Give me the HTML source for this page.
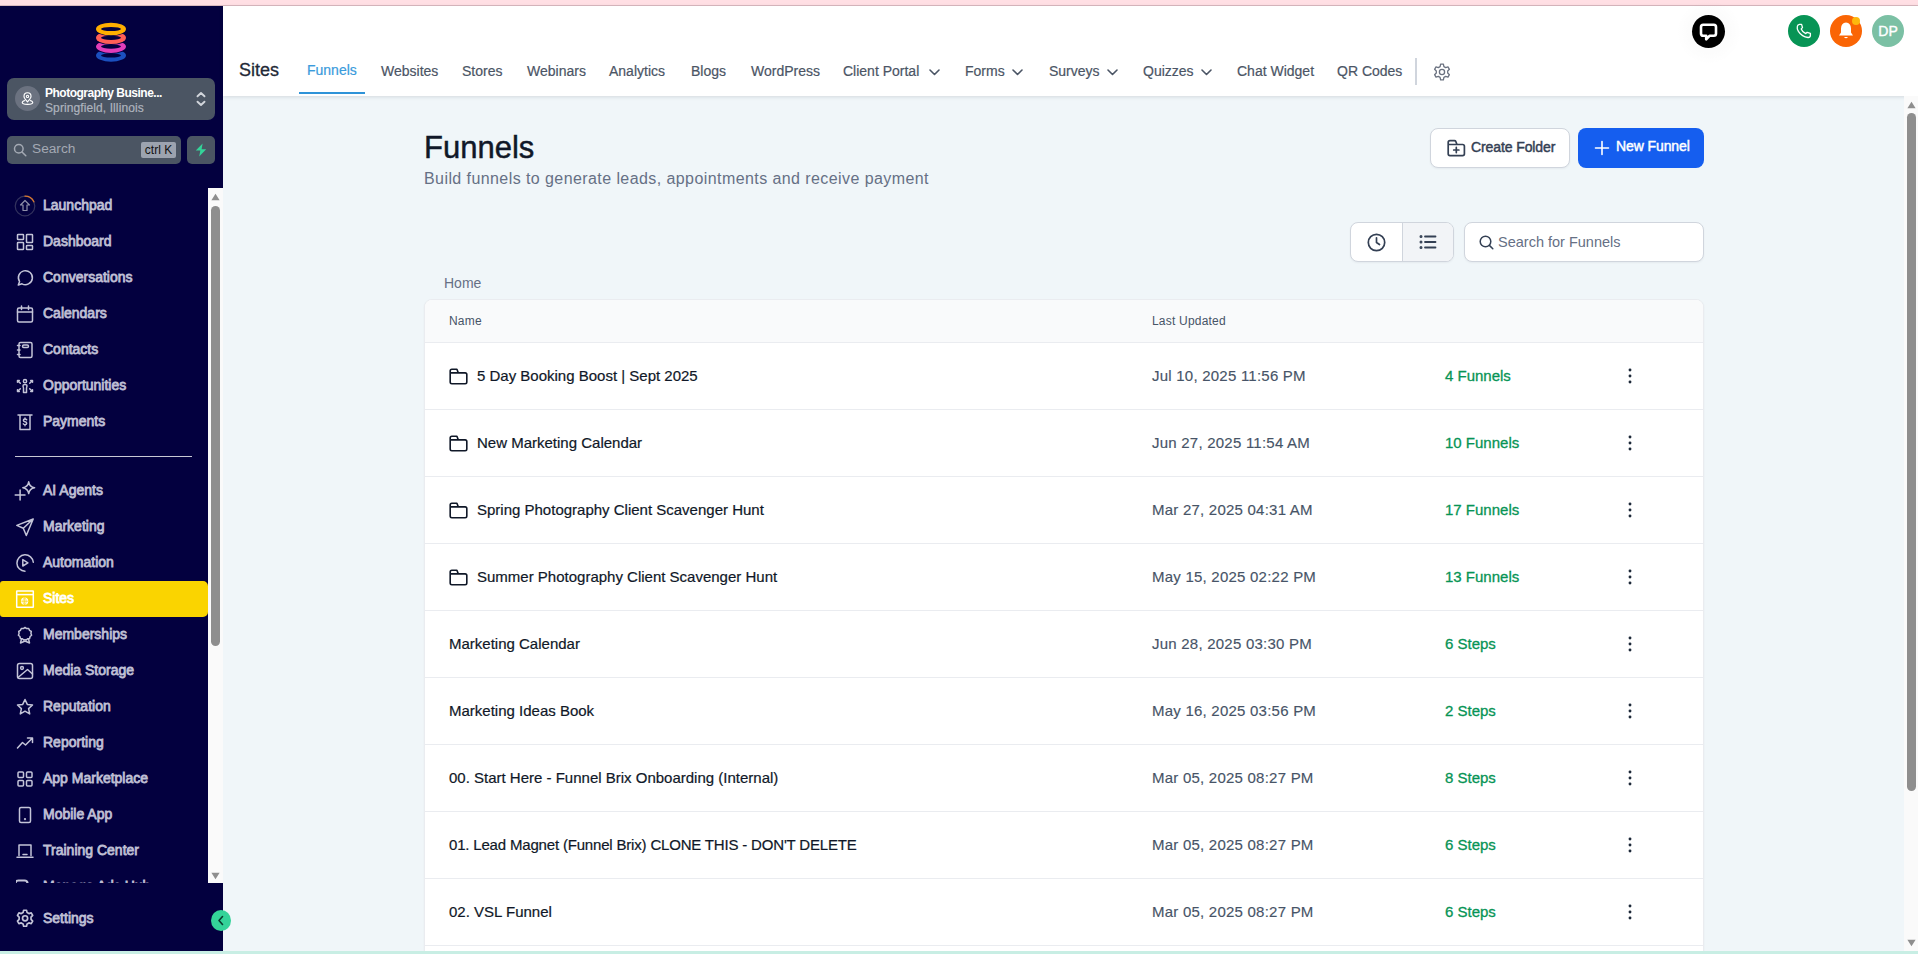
<!DOCTYPE html>
<html><head><meta charset="utf-8"><title>Funnels</title>
<style>
*{box-sizing:border-box;margin:0;padding:0}
html,body{width:1918px;height:954px;overflow:hidden;background:#F0F6F9;font-family:"Liberation Sans",sans-serif;position:relative}
.abs{position:absolute}
#pink{position:absolute;left:0;top:0;width:1918px;height:6px;background:#FFDFE4;border-bottom:1px solid #D9B9BF}
#teal{position:absolute;left:0;top:951px;width:1918px;height:3px;background:#C8EEE4}
#side{position:absolute;left:0;top:6px;width:223px;height:945px;background:#03003F;overflow:hidden}
#logo{position:absolute;left:95px;top:15px}
#loc{position:absolute;left:7px;top:72px;width:208px;height:42px;border-radius:7px;background:#4B5563}
#loc .pin{position:absolute;left:8px;top:8px;width:25px;height:25px;border-radius:50%;background:#6B7280}
#loc .t1{position:absolute;left:38px;top:8px;font-size:12px;font-weight:bold;color:#fff;letter-spacing:-0.5px;white-space:nowrap}
#loc .t2{position:absolute;left:38px;top:23px;font-size:12px;color:#AEB4BE;white-space:nowrap;letter-spacing:0.1px;-webkit-text-stroke:0.2px #AEB4BE}
#loc .chev{position:absolute;left:188px;top:12px}
#srch{position:absolute;left:7px;top:130px;width:174px;height:28px;border-radius:5px;background:#4B5563}
#srch .tx{position:absolute;left:25px;top:5px;font-size:13.7px;color:#A3A9B3}
#srch .kb{position:absolute;left:134px;top:6px;width:35px;height:16px;border-radius:2px;background:#9CA3AF;font-size:12px;color:#111;text-align:center;line-height:16px;letter-spacing:0px}
#bolt{position:absolute;left:187px;top:130px;width:28px;height:28px;border-radius:5px;background:#4B5563}
#sep{position:absolute;left:15px;top:450px;width:177px;height:1px;background:#C8C8D4}
#sites-hl{position:absolute;left:0;top:575px;width:208px;height:36px;border-radius:3px 5px 5px 3px;background:#FAD400}
#navwrap{position:absolute;left:0;top:182px;width:208px;height:695px;overflow:hidden}
.ni{position:absolute;left:0;width:208px;height:36px}
.ni .nic{position:absolute;display:block;line-height:0}
.ni .nt{position:absolute;left:43px;top:0;line-height:36px;font-size:14px;color:#BFBFD4;white-space:nowrap;-webkit-text-stroke:0.8px currentColor}
#sscroll{position:absolute;left:208px;top:182px;width:15px;height:695px;background:#FAFAFA}
#settings{position:absolute;left:0;top:894px;width:208px;height:36px}
#collapse{position:absolute;left:211px;top:910px;width:20px;height:21px;border-radius:50%;background:#34D399}

#hdr{position:absolute;left:223px;top:6px;width:1695px;height:90px;background:#fff;box-shadow:0 1px 4px rgba(16,24,40,0.13)}
.tab{position:absolute;top:60px;font-size:14px;color:#4B5565;white-space:nowrap;line-height:22px;-webkit-text-stroke:0.2px currentColor}
.chv{position:absolute;top:69px}
#main-scroll{position:absolute;left:1904px;top:96px;width:14px;height:855px;background:#FAFAFA}
.sb-thumb{position:absolute;background:#8E8E8E;border-radius:5px}

#title{position:absolute;left:424px;top:128px;font-size:31px;color:#101828;line-height:40px;white-space:nowrap;letter-spacing:0px;-webkit-text-stroke:0.45px #101828}
#sub{position:absolute;left:424px;top:168px;font-size:16px;color:#667085;line-height:22px;white-space:nowrap;letter-spacing:0.42px}
.btn{position:absolute;border-radius:8px;font-size:14px;white-space:nowrap;-webkit-text-stroke:0.45px currentColor;letter-spacing:-0.1px}
#home{position:absolute;left:444px;top:274px;font-size:14px;color:#667085;line-height:18px}
#table{position:absolute;left:424px;top:299px;width:1280px;height:660px;background:#fff;border:1px solid #EAECF0;border-radius:8px;overflow:hidden;box-shadow:0 1px 2px rgba(16,24,40,0.05)}
#thead{position:absolute;left:0;top:0;width:100%;height:43px;background:#F9FAFB;border-bottom:1px solid #EAECF0}
#thead span{position:absolute;top:13px;font-size:12px;letter-spacing:0.2px;color:#475467;line-height:16px}
.row{position:absolute;left:0;width:100%;height:67px;border-bottom:1px solid #EAECF0}
.row .fi{position:absolute;top:24.5px;line-height:0}
.row .rn{position:absolute;top:24px;font-size:15px;color:#101828;line-height:18px;white-space:nowrap;-webkit-text-stroke:0.2px #101828}
.row .rd{position:absolute;left:727px;top:24px;font-size:15px;color:#475467;line-height:18px;white-space:nowrap;letter-spacing:0.23px;-webkit-text-stroke:0.15px #475467}
.row .rc{position:absolute;left:1020px;top:24px;font-size:15px;color:#079455;line-height:18px;white-space:nowrap;-webkit-text-stroke:0.3px currentColor}
.row .kb{position:absolute;left:1203px;top:25px;line-height:0}
</style></head>
<body>
<div id="pink"></div>

<!-- SIDEBAR -->
<div id="side">
  <svg id="logo" width="32" height="42" viewBox="0 0 32 42"><ellipse cx="16" cy="34.4" rx="16" ry="7.2" fill="#03003F"/><ellipse cx="16" cy="34.4" rx="15" ry="6.3" fill="#1B4FBF"/><ellipse cx="16" cy="34.4" rx="10" ry="2.1" fill="#03003F"/><ellipse cx="16" cy="25.6" rx="16" ry="7.2" fill="#03003F"/><ellipse cx="16" cy="25.6" rx="15" ry="6.3" fill="#E13DBA"/><ellipse cx="16" cy="25.6" rx="10" ry="2.1" fill="#03003F"/><ellipse cx="16" cy="16.8" rx="16" ry="7.2" fill="#03003F"/><ellipse cx="16" cy="16.8" rx="15" ry="6.3" fill="#FF5E57"/><ellipse cx="16" cy="16.8" rx="10" ry="2.1" fill="#03003F"/><ellipse cx="16" cy="8.0" rx="16" ry="7.2" fill="#03003F"/><ellipse cx="16" cy="8.0" rx="15" ry="6.3" fill="#FFAE00"/><ellipse cx="16" cy="8.0" rx="10" ry="2.1" fill="#03003F"/></svg>
  <div id="loc">
    <div class="pin"><svg width="25" height="25" viewBox="0 0 25 25" fill="none" stroke="#fff" stroke-width="1.3"><g transform="translate(12.5 13.2) scale(0.88) translate(-12.5 -12.5)"><path d="M12.5 15.5 Q8.5 11.5 8.5 9.2 A4 4 0 0 1 16.5 9.2 Q16.5 11.5 12.5 15.5 Z"/><circle cx="12.5" cy="9.3" r="1.3" fill="none"/><path d="M9.5 13.8 Q6.5 14.8 6.5 16.2 Q6.5 18.3 12.5 18.3 Q18.5 18.3 18.5 16.2 Q18.5 14.8 15.5 13.8"/></g></svg></div>
    <div class="t1">Photography Busine...</div>
    <div class="t2">Springfield, Illinois</div>
    <svg class="chev" width="12" height="18" viewBox="0 0 12 18" fill="none" stroke="#D1D5DB" stroke-width="1.9" stroke-linecap="round" stroke-linejoin="round"><path d="M2.5 6.3 L6 3 L9.5 6.3 M2.5 11.7 L6 15 L9.5 11.7"/></svg>
  </div>
  <div id="srch">
    <svg class="abs" style="left:6px;top:7px" width="14" height="14" viewBox="0 0 14 14" fill="none" stroke="#A3A9B3" stroke-width="1.5" stroke-linecap="round"><circle cx="5.8" cy="5.8" r="4.3"/><path d="M9 9 L12.8 12.8"/></svg>
    <div class="tx">Search</div>
    <div class="kb">ctrl K</div>
  </div>
  <div id="bolt"><svg class="abs" style="left:7px;top:7px" width="14" height="14" viewBox="0 0 14 14"><path d="M8.6 0.6 L1.8 7.6 H6.3 L5.2 13.4 L12.2 6.2 H7.6 Z" fill="#34D399"/></svg></div>
  <div id="sep"></div>
  <div id="sites-hl"></div>
  <div id="navwrap">
<div class="ni" style="top:-1px"><span class="nic" style="left:14px;top:8px"><svg width="22" height="22" viewBox="0 0 22 22" fill="none" stroke-linecap="round" stroke-linejoin="round"><circle cx="11" cy="11" r="9.8" stroke="#34335E" stroke-width="1.2"/><path d="M11 1.2 A9.8 9.8 0 0 1 19.9 6.8" stroke="#D9782F" stroke-width="1.3"/><path d="M11 5.5 L15.5 10 H13 V15.5 H9 V10 H6.5 Z" stroke="#8E8EA8" stroke-width="1.2"/></svg></span><span class="nt" style="color:#BFBFD4">Launchpad</span></div>
<div class="ni" style="top:35px"><span class="nic" style="left:16px;top:10px"><svg width="18" height="18" viewBox="0 0 18 18" fill="none" stroke="#C4C4D8" stroke-width="1.5" stroke-linecap="round" stroke-linejoin="round" ><rect x="1.5" y="1.5" width="6" height="5" rx="0.6"/><rect x="10.5" y="1.5" width="6" height="8" rx="0.6"/><rect x="1.5" y="9.5" width="6" height="7" rx="0.6"/><rect x="10.5" y="12.5" width="6" height="4" rx="0.6"/></svg></span><span class="nt" style="color:#BFBFD4">Dashboard</span></div>
<div class="ni" style="top:71px"><span class="nic" style="left:16px;top:10px"><svg width="18" height="18" viewBox="0 0 18 18" fill="none" stroke="#C4C4D8" stroke-width="1.5" stroke-linecap="round" stroke-linejoin="round" ><path d="M2.3 16 L3.6 12.6 A7 7 0 1 1 6 14.8 Z"/></svg></span><span class="nt" style="color:#BFBFD4">Conversations</span></div>
<div class="ni" style="top:107px"><span class="nic" style="left:16px;top:10px"><svg width="18" height="18" viewBox="0 0 18 18" fill="none" stroke="#C4C4D8" stroke-width="1.5" stroke-linecap="round" stroke-linejoin="round" ><rect x="1.5" y="3" width="15" height="14" rx="1.5"/><path d="M1.5 7 H16.5 M5.5 1 V4.5 M12.5 1 V4.5"/></svg></span><span class="nt" style="color:#BFBFD4">Calendars</span></div>
<div class="ni" style="top:143px"><span class="nic" style="left:16px;top:10px"><svg width="18" height="18" viewBox="0 0 18 18" fill="none" stroke="#C4C4D8" stroke-width="1.5" stroke-linecap="round" stroke-linejoin="round" ><rect x="3" y="1.5" width="13" height="15" rx="1.5"/><rect x="6.5" y="4" width="6" height="2.5" rx="1.2"/><path d="M1.5 4.5 H4 M1.5 9 H4 M1.5 13.5 H4"/></svg></span><span class="nt" style="color:#BFBFD4">Contacts</span></div>
<div class="ni" style="top:179px"><span class="nic" style="left:16px;top:10px"><svg width="18" height="18" viewBox="0 0 18 18" fill="none" stroke="#C4C4D8" stroke-width="1.5" stroke-linecap="round" stroke-linejoin="round" ><circle cx="9" cy="4.2" r="1.6"/><path d="M7.5 15.5 V11 Q6.8 9.5 7.2 8 Q9 6.8 10.8 8 Q11.2 9.5 10.5 11 V15.5 Z"/><path d="M1.5 3.5 L4.3 6.3 M1.5 3.5 V5.3 M1.5 3.5 H3.3 M16.5 3.5 L13.7 6.3 M16.5 3.5 V5.3 M16.5 3.5 H14.7 M1.5 14.5 L4.3 11.7 M1.5 14.5 V12.7 M1.5 14.5 H3.3 M16.5 14.5 L13.7 11.7 M16.5 14.5 V12.7 M16.5 14.5 H14.7"/></svg></span><span class="nt" style="color:#BFBFD4">Opportunities</span></div>
<div class="ni" style="top:215px"><span class="nic" style="left:16px;top:10px"><svg width="18" height="18" viewBox="0 0 18 18" fill="none" stroke="#C4C4D8" stroke-width="1.5" stroke-linecap="round" stroke-linejoin="round" ><path d="M2 2 H16 M4 2 V16.5 H14 V2"/><path d="M10.6 6.8 Q10 6 9 6 Q7.4 6 7.4 7.3 Q7.4 8.4 9 8.7 Q10.7 9 10.7 10.3 Q10.7 11.7 9 11.7 Q7.9 11.7 7.3 10.9 M9 5 V6 M9 11.7 V12.8"/></svg></span><span class="nt" style="color:#BFBFD4">Payments</span></div>
<div class="ni" style="top:284px"><span class="nic" style="left:16px;top:10px"><svg width="18" height="18" viewBox="0 0 18 18" fill="none" stroke="#C4C4D8" stroke-width="1.5" stroke-linecap="round" stroke-linejoin="round" style="overflow:visible"><path d="M-0.8 13 H9 M4.1 8.1 V17.9"/><path d="M12.7 -0.2 Q13.5 4.9 18.6 5.7 Q13.5 6.5 12.7 11.6 Q11.9 6.5 6.8 5.7 Q11.9 4.9 12.7 -0.2 Z"/></svg></span><span class="nt" style="color:#BFBFD4">AI Agents</span></div>
<div class="ni" style="top:320px"><span class="nic" style="left:16px;top:10px"><svg width="18" height="18" viewBox="0 0 18 18" fill="none" stroke="#C4C4D8" stroke-width="1.5" stroke-linecap="round" stroke-linejoin="round" style="overflow:visible"><path d="M17.2 1 L0.8 7.4 L7.3 10.3 L10.3 17.5 Z M17.2 1 L7.3 10.3"/></svg></span><span class="nt" style="color:#BFBFD4">Marketing</span></div>
<div class="ni" style="top:356px"><span class="nic" style="left:16px;top:10px"><svg width="18" height="18" viewBox="0 0 18 18" fill="none" stroke="#C4C4D8" stroke-width="1.5" stroke-linecap="round" stroke-linejoin="round" style="overflow:visible"><path d="M17.3 8.3 A8.2 8.2 0 1 0 9 17.2"/><path d="M6.8 5.6 V12 L11.9 8.8 Z"/></svg></span><span class="nt" style="color:#BFBFD4">Automation</span></div>
<div class="ni" style="top:392px"><span class="nic" style="left:16px;top:10px"><svg width="18" height="18" viewBox="0 0 18 18" fill="none" stroke="#FFFFFF" stroke-width="1.5" style="overflow:visible"><rect x="0.7" y="0.9" width="16.6" height="16.4" rx="0.3"/><path d="M0.7 4.6 H17.3"/><circle cx="8.6" cy="11.2" r="3.6" fill="#fff" stroke="none"/><path d="M5.2 11.2 H12 M8.6 7.7 V14.7" stroke="#FAD400" stroke-width="0.7"/><ellipse cx="8.6" cy="11.2" rx="1.6" ry="3.4" stroke="#FAD400" stroke-width="0.6"/></svg></span><span class="nt" style="color:#FFFFFF">Sites</span></div>
<div class="ni" style="top:428px"><span class="nic" style="left:16px;top:10px"><svg width="18" height="18" viewBox="0 0 18 18" fill="none" stroke="#C4C4D8" stroke-width="1.5" stroke-linecap="round" stroke-linejoin="round" ><path d="M9 1.5 L10.7 2.6 L12.7 2.5 L13.5 4.3 L15.3 5.3 L14.9 7.3 L15.6 9.2 L14.1 10.5 L13.6 12.5 L11.6 12.7 L10.2 14.1 L9 13.6 L7.8 14.1 L6.4 12.7 L4.4 12.5 L3.9 10.5 L2.4 9.2 L3.1 7.3 L2.7 5.3 L4.5 4.3 L5.3 2.5 L7.3 2.6 Z"/><path d="M5.5 12.8 L4.5 17 L9 15 L13.5 17 L12.5 12.8"/></svg></span><span class="nt" style="color:#BFBFD4">Memberships</span></div>
<div class="ni" style="top:464px"><span class="nic" style="left:16px;top:10px"><svg width="18" height="18" viewBox="0 0 18 18" fill="none" stroke="#C4C4D8" stroke-width="1.5" stroke-linecap="round" stroke-linejoin="round" ><rect x="1.5" y="1.5" width="15" height="15" rx="2"/><circle cx="6" cy="6" r="1.4"/><path d="M2 15.5 L11.5 7.5 L16.5 12"/></svg></span><span class="nt" style="color:#BFBFD4">Media Storage</span></div>
<div class="ni" style="top:500px"><span class="nic" style="left:16px;top:10px"><svg width="18" height="18" viewBox="0 0 18 18" fill="none" stroke="#C4C4D8" stroke-width="1.5" stroke-linecap="round" stroke-linejoin="round" ><path d="M9 1.5 L11.3 6.4 L16.5 7 L12.6 10.6 L13.7 15.9 L9 13.2 L4.3 15.9 L5.4 10.6 L1.5 7 L6.7 6.4 Z"/></svg></span><span class="nt" style="color:#BFBFD4">Reputation</span></div>
<div class="ni" style="top:536px"><span class="nic" style="left:16px;top:10px"><svg width="18" height="18" viewBox="0 0 18 18" fill="none" stroke="#C4C4D8" stroke-width="1.5" stroke-linecap="round" stroke-linejoin="round" ><path d="M1.5 14 L6.5 8.5 L9.5 11 L16.5 4 M11.5 4 H16.5 V8.5"/></svg></span><span class="nt" style="color:#BFBFD4">Reporting</span></div>
<div class="ni" style="top:572px"><span class="nic" style="left:16px;top:10px"><svg width="18" height="18" viewBox="0 0 18 18" fill="none" stroke="#C4C4D8" stroke-width="1.5" stroke-linecap="round" stroke-linejoin="round" ><rect x="2" y="2" width="5.5" height="5.5" rx="1"/><rect x="10.5" y="2" width="5.5" height="5.5" rx="1"/><rect x="2" y="10.5" width="5.5" height="5.5" rx="1"/><rect x="10.5" y="10.5" width="5.5" height="5.5" rx="1"/></svg></span><span class="nt" style="color:#BFBFD4">App Marketplace</span></div>
<div class="ni" style="top:608px"><span class="nic" style="left:16px;top:10px"><svg width="18" height="18" viewBox="0 0 18 18" fill="none" stroke="#C4C4D8" stroke-width="1.5" stroke-linecap="round" stroke-linejoin="round" ><rect x="3.5" y="1.5" width="11" height="15" rx="1.5"/><circle cx="9" cy="13.2" r="0.4" fill="#C4C4D8"/></svg></span><span class="nt" style="color:#BFBFD4">Mobile App</span></div>
<div class="ni" style="top:644px"><span class="nic" style="left:16px;top:10px"><svg width="18" height="18" viewBox="0 0 18 18" fill="none" stroke="#C4C4D8" stroke-width="1.5" stroke-linecap="round" stroke-linejoin="round" ><path d="M3 13.5 V3 H15 V13.5 M1 15.2 H17"/><path d="M7 12.5 H11"/></svg></span><span class="nt" style="color:#BFBFD4">Training Center</span></div>
<div class="ni" style="top:680px"><span class="nic" style="left:16px;top:10px"><svg width="18" height="18" viewBox="0 0 18 18" fill="none" stroke="#C4C4D8" stroke-width="1.5" stroke-linecap="round" stroke-linejoin="round" ><rect x="-0.5" y="2.5" width="12" height="14" rx="3" stroke-width="2.2"/></svg></span><span class="nt" style="color:#BFBFD4">Manage Ads Hub</span></div>

  </div>
  <div id="sscroll">
    <svg class="abs" style="left:3px;top:5px" width="9" height="8" viewBox="0 0 9 8"><path d="M4.5 0.8 L8.6 7.2 H0.4 Z" fill="#8E8E8E"/></svg>
    <div class="sb-thumb" style="left:3px;top:18px;width:9px;height:440px"></div>
    <svg class="abs" style="left:3px;top:684px" width="9" height="8" viewBox="0 0 9 8"><path d="M0.4 0.8 H8.6 L4.5 7.2 Z" fill="#8E8E8E"/></svg>
  </div>
  <div id="settings"><span class="abs" style="left:15px;top:8px;line-height:0;transform:scale(1.12);transform-origin:0 0"><svg width="18" height="18" viewBox="0 0 18 18" fill="none" stroke="#C4C4D8" stroke-width="1.5" stroke-linecap="round" stroke-linejoin="round" ><path d="M7.7 1.5 H10.3 L10.8 3.6 L12.4 4.5 L14.5 3.9 L15.8 6.1 L14.3 7.7 V9.6 L15.8 11.2 L14.5 13.4 L12.4 12.8 L10.8 13.7 L10.3 15.8 H7.7 L7.2 13.7 L5.6 12.8 L3.5 13.4 L2.2 11.2 L3.7 9.6 V7.7 L2.2 6.1 L3.5 3.9 L5.6 4.5 L7.2 3.6 Z" transform="translate(0,0.5)"/><circle cx="9" cy="9.2" r="2.3"/></svg></span><span class="abs" style="left:43px;top:0;line-height:36px;font-size:14px;color:#BFBFD4;-webkit-text-stroke:0.8px #BFBFD4">Settings</span></div>
</div>
<div id="collapse"><svg class="abs" style="left:5px;top:5px" width="10" height="11" viewBox="0 0 10 11" fill="none" stroke="#0B3B2E" stroke-width="1.6" stroke-linecap="round" stroke-linejoin="round"><path d="M6.5 1.5 L3 5.5 L6.5 9.5"/></svg></div>

<!-- HEADER -->
<div id="hdr"></div>
<div class="abs" style="left:239px;top:58px;font-size:18px;color:#1F2937;line-height:24px;-webkit-text-stroke:0.3px #1F2937">Sites</div>
<div class="tab" style="left:307px;top:59px;color:#3A9BDC">Funnels</div>
<div class="abs" style="left:299px;top:92px;width:66px;height:2px;background:#2F93D8"></div>
<div class="tab" style="left:381px">Websites</div>
<div class="tab" style="left:462px">Stores</div>
<div class="tab" style="left:527px">Webinars</div>
<div class="tab" style="left:609px">Analytics</div>
<div class="tab" style="left:691px">Blogs</div>
<div class="tab" style="left:751px">WordPress</div>
<div class="tab" style="left:843px">Client Portal</div>
<div class="tab" style="left:965px">Forms</div>
<div class="tab" style="left:1049px">Surveys</div>
<div class="tab" style="left:1143px">Quizzes</div>
<div class="tab" style="left:1237px">Chat Widget</div>
<div class="tab" style="left:1337px">QR Codes</div>
<svg class="chv" style="left:929px" width="11" height="7" viewBox="0 0 11 7" fill="none" stroke="#4B5565" stroke-width="1.6" stroke-linecap="round" stroke-linejoin="round"><path d="M1 1 L5.5 5.5 L10 1"/></svg>
<svg class="chv" style="left:1012px" width="11" height="7" viewBox="0 0 11 7" fill="none" stroke="#4B5565" stroke-width="1.6" stroke-linecap="round" stroke-linejoin="round"><path d="M1 1 L5.5 5.5 L10 1"/></svg>
<svg class="chv" style="left:1107px" width="11" height="7" viewBox="0 0 11 7" fill="none" stroke="#4B5565" stroke-width="1.6" stroke-linecap="round" stroke-linejoin="round"><path d="M1 1 L5.5 5.5 L10 1"/></svg>
<svg class="chv" style="left:1201px" width="11" height="7" viewBox="0 0 11 7" fill="none" stroke="#4B5565" stroke-width="1.6" stroke-linecap="round" stroke-linejoin="round"><path d="M1 1 L5.5 5.5 L10 1"/></svg>

<div class="abs" style="left:1415px;top:58px;width:2px;height:27px;background:#D0D5DD"></div>
<svg class="abs" style="left:1432px;top:62px" width="20" height="20" viewBox="0 0 20 20" fill="none" stroke="#6B7280" stroke-width="1.3" stroke-linejoin="round"><path d="M8.6 1.8 H11.4 L11.9 4.2 L13.7 5.2 L16 4.5 L17.4 6.9 L15.7 8.6 V10.6 L17.4 12.3 L16 14.7 L13.7 14 L11.9 15 L11.4 17.4 H8.6 L8.1 15 L6.3 14 L4 14.7 L2.6 12.3 L4.3 10.6 V8.6 L2.6 6.9 L4 4.5 L6.3 5.2 L8.1 4.2 Z" transform="translate(0,0.4)"/><circle cx="10" cy="10" r="2.6"/></svg>

<!-- top right icons -->
<div class="abs" style="left:1676px;top:-1px;width:66px;height:66px;border-radius:50%;background:radial-gradient(circle, rgba(0,0,0,0.012) 45%, rgba(0,0,0,0) 70%)"></div>
<div class="abs" style="left:1692px;top:15px;width:33px;height:33px;border-radius:50%;background:#000"><svg class="abs" style="left:7px;top:8px" width="19" height="19" viewBox="0 0 19 19" fill="none" stroke="#fff" stroke-width="2.6" stroke-linejoin="round"><path d="M4.2 1.8 H14.8 Q17 1.8 17 4 V10.6 Q17 12.8 14.8 12.8 H10.5 L7.2 16.3 V12.8 H4.2 Q2 12.8 2 10.6 V4 Q2 1.8 4.2 1.8 Z"/></svg></div>
<div class="abs" style="left:1788px;top:15px;width:32px;height:32px;border-radius:50%;background:#079455"><svg class="abs" style="left:8px;top:8px" width="16" height="16" viewBox="0 0 16 16" fill="none" stroke="#fff" stroke-width="1.3" stroke-linejoin="round"><path d="M3.5 1.3 L5.6 1.3 L6.5 4.6 L5.2 5.9 Q6.3 8.8 9.8 10.6 L11.1 9.3 L14.4 10.3 L14.4 12.4 Q14.2 14.6 12 14.5 Q6 14 2.4 8.4 Q0.8 5.5 1.3 3.4 Q1.7 1.4 3.5 1.3 Z"/></svg></div>
<div class="abs" style="left:1830px;top:15px;width:32px;height:32px;border-radius:50%;background:#FA6505"><svg class="abs" style="left:7px;top:6px" width="18" height="20" viewBox="0 0 18 20"><path d="M9 1.5 Q13.8 1.8 14 7.5 V11.5 L16 14.5 H2 L4 11.5 V7.5 Q4.2 1.8 9 1.5 Z" fill="#fff"/><path d="M7 16 Q9 18.5 11 16 Z" fill="#fff"/></svg></div>
<div class="abs" style="left:1852px;top:17px;width:8px;height:8px;border-radius:50%;background:#FDB80D"></div>
<div class="abs" style="left:1872px;top:15px;width:32px;height:32px;border-radius:50%;background:#7BC0A4;color:#fff;font-size:14px;text-align:center;line-height:32px;letter-spacing:0px;-webkit-text-stroke:0.4px #fff">DP</div>

<!-- MAIN -->
<div id="title">Funnels</div>
<div id="sub">Build funnels to generate leads, appointments and receive payment</div>
<div class="btn" style="left:1430px;top:128px;width:140px;height:40px;background:#fff;border:1px solid #D0D5DD;color:#344054;box-shadow:0 1px 2px rgba(16,24,40,0.05)">
  <svg class="abs" style="left:16px;top:10px" width="19" height="18" viewBox="0 0 19 18" fill="none" stroke="#344054" stroke-width="1.7" stroke-linejoin="round" stroke-linecap="round"><path d="M1.2 3.5 V14.8 Q1.2 16.6 3 16.6 H15.6 Q17.4 16.6 17.4 14.8 V7.3 Q17.4 5.5 15.6 5.5 H10 L8.8 2.5 Q8.4 1.7 7.5 1.7 H3 Q1.2 1.7 1.2 3.5 Z M1.2 5.5 H10"/><path d="M9.3 8.4 V13.6 M6.7 11 H11.9"/></svg>
  <span class="abs" style="left:40px;top:9px;line-height:18px">Create Folder</span>
</div>
<div class="btn" style="left:1578px;top:128px;width:126px;height:40px;background:#155EEF;color:#fff">
  <svg class="abs" style="left:16px;top:12px" width="16" height="16" viewBox="0 0 16 16" fill="none" stroke="#fff" stroke-width="1.6" stroke-linecap="round"><path d="M8 1.5 V14.5 M1.5 8 H14.5"/></svg>
  <span class="abs" style="left:38px;top:9px;line-height:18px">New Funnel</span>
</div>

<div class="abs" style="left:1350px;top:222px;width:104px;height:40px;border:1px solid #D0D5DD;border-radius:8px;background:#fff;overflow:hidden;box-shadow:0 1px 2px rgba(16,24,40,0.05)">
  <div class="abs" style="left:51px;top:0;width:52px;height:40px;background:#F2F4F7;border-left:1px solid #D0D5DD"></div>
  <svg class="abs" style="left:16px;top:10px" width="19" height="19" viewBox="0 0 19 19" fill="none" stroke="#344054" stroke-width="1.7" stroke-linecap="round" stroke-linejoin="round"><circle cx="9.5" cy="9.5" r="8.2"/><path d="M9.5 4.8 V9.5 L12.5 11.5"/></svg>
  <svg class="abs" style="left:68px;top:11px" width="18" height="16" viewBox="0 0 18 16" fill="none" stroke="#344054" stroke-width="1.8" stroke-linecap="round"><path d="M6 2.5 H16.5 M6 8 H16.5 M6 13.5 H16.5"/><circle cx="2" cy="2.5" r="0.6" fill="#344054"/><circle cx="2" cy="8" r="0.6" fill="#344054"/><circle cx="2" cy="13.5" r="0.6" fill="#344054"/></svg>
</div>
<div class="abs" style="left:1464px;top:222px;width:240px;height:40px;border:1px solid #D0D5DD;border-radius:8px;background:#fff;box-shadow:0 1px 2px rgba(16,24,40,0.05)">
  <svg class="abs" style="left:14px;top:12px" width="15" height="15" viewBox="0 0 15 15" fill="none" stroke="#344054" stroke-width="1.5" stroke-linecap="round"><circle cx="6.5" cy="6.5" r="5.3"/><path d="M10.4 10.4 L13.8 13.8"/></svg>
  <span class="abs" style="left:33px;top:10px;font-size:14.5px;color:#667085;line-height:18px">Search for Funnels</span>
</div>

<div id="home">Home</div>
<div id="table">
  <div id="thead"><span style="left:24px">Name</span><span style="left:727px">Last Updated</span></div>
<div class="row" style="top:43px"><span class="fi" style="left:24px"><svg class="fold" width="19" height="17" viewBox="0 0 20 18" fill="none" stroke="#101828" stroke-width="1.7" stroke-linejoin="round"><path d="M1.2 3.2 V14.8 Q1.2 16.6 3 16.6 H17 Q18.8 16.6 18.8 14.8 V7 Q18.8 5.2 17 5.2 H9.8 L8.3 1.3 H3 Q1.2 1.3 1.2 3.1 Z M1.2 5.2 H9.8"/></svg></span><span class="rn" style="left:52px">5 Day Booking Boost &#124; Sept 2025</span><span class="rd">Jul 10, 2025 11:56 PM</span><span class="rc">4 Funnels</span><span class="kb"><svg width="4" height="16" viewBox="0 0 4 16" fill="#1D2939"><circle cx="2" cy="2" r="1.45"/><circle cx="2" cy="8" r="1.45"/><circle cx="2" cy="14" r="1.45"/></svg></span></div>
<div class="row" style="top:110px"><span class="fi" style="left:24px"><svg class="fold" width="19" height="17" viewBox="0 0 20 18" fill="none" stroke="#101828" stroke-width="1.7" stroke-linejoin="round"><path d="M1.2 3.2 V14.8 Q1.2 16.6 3 16.6 H17 Q18.8 16.6 18.8 14.8 V7 Q18.8 5.2 17 5.2 H9.8 L8.3 1.3 H3 Q1.2 1.3 1.2 3.1 Z M1.2 5.2 H9.8"/></svg></span><span class="rn" style="left:52px">New Marketing Calendar</span><span class="rd">Jun 27, 2025 11:54 AM</span><span class="rc">10 Funnels</span><span class="kb"><svg width="4" height="16" viewBox="0 0 4 16" fill="#1D2939"><circle cx="2" cy="2" r="1.45"/><circle cx="2" cy="8" r="1.45"/><circle cx="2" cy="14" r="1.45"/></svg></span></div>
<div class="row" style="top:177px"><span class="fi" style="left:24px"><svg class="fold" width="19" height="17" viewBox="0 0 20 18" fill="none" stroke="#101828" stroke-width="1.7" stroke-linejoin="round"><path d="M1.2 3.2 V14.8 Q1.2 16.6 3 16.6 H17 Q18.8 16.6 18.8 14.8 V7 Q18.8 5.2 17 5.2 H9.8 L8.3 1.3 H3 Q1.2 1.3 1.2 3.1 Z M1.2 5.2 H9.8"/></svg></span><span class="rn" style="left:52px">Spring Photography Client Scavenger Hunt</span><span class="rd">Mar 27, 2025 04:31 AM</span><span class="rc">17 Funnels</span><span class="kb"><svg width="4" height="16" viewBox="0 0 4 16" fill="#1D2939"><circle cx="2" cy="2" r="1.45"/><circle cx="2" cy="8" r="1.45"/><circle cx="2" cy="14" r="1.45"/></svg></span></div>
<div class="row" style="top:244px"><span class="fi" style="left:24px"><svg class="fold" width="19" height="17" viewBox="0 0 20 18" fill="none" stroke="#101828" stroke-width="1.7" stroke-linejoin="round"><path d="M1.2 3.2 V14.8 Q1.2 16.6 3 16.6 H17 Q18.8 16.6 18.8 14.8 V7 Q18.8 5.2 17 5.2 H9.8 L8.3 1.3 H3 Q1.2 1.3 1.2 3.1 Z M1.2 5.2 H9.8"/></svg></span><span class="rn" style="left:52px">Summer Photography Client Scavenger Hunt</span><span class="rd">May 15, 2025 02:22 PM</span><span class="rc">13 Funnels</span><span class="kb"><svg width="4" height="16" viewBox="0 0 4 16" fill="#1D2939"><circle cx="2" cy="2" r="1.45"/><circle cx="2" cy="8" r="1.45"/><circle cx="2" cy="14" r="1.45"/></svg></span></div>
<div class="row" style="top:311px"><span class="rn" style="left:24px">Marketing Calendar</span><span class="rd">Jun 28, 2025 03:30 PM</span><span class="rc">6 Steps</span><span class="kb"><svg width="4" height="16" viewBox="0 0 4 16" fill="#1D2939"><circle cx="2" cy="2" r="1.45"/><circle cx="2" cy="8" r="1.45"/><circle cx="2" cy="14" r="1.45"/></svg></span></div>
<div class="row" style="top:378px"><span class="rn" style="left:24px">Marketing Ideas Book</span><span class="rd">May 16, 2025 03:56 PM</span><span class="rc">2 Steps</span><span class="kb"><svg width="4" height="16" viewBox="0 0 4 16" fill="#1D2939"><circle cx="2" cy="2" r="1.45"/><circle cx="2" cy="8" r="1.45"/><circle cx="2" cy="14" r="1.45"/></svg></span></div>
<div class="row" style="top:445px"><span class="rn" style="left:24px">00. Start Here - Funnel Brix Onboarding (Internal)</span><span class="rd">Mar 05, 2025 08:27 PM</span><span class="rc">8 Steps</span><span class="kb"><svg width="4" height="16" viewBox="0 0 4 16" fill="#1D2939"><circle cx="2" cy="2" r="1.45"/><circle cx="2" cy="8" r="1.45"/><circle cx="2" cy="14" r="1.45"/></svg></span></div>
<div class="row" style="top:512px"><span class="rn" style="left:24px;letter-spacing:-0.18px">01. Lead Magnet (Funnel Brix) CLONE THIS - DON'T DELETE</span><span class="rd">Mar 05, 2025 08:27 PM</span><span class="rc">6 Steps</span><span class="kb"><svg width="4" height="16" viewBox="0 0 4 16" fill="#1D2939"><circle cx="2" cy="2" r="1.45"/><circle cx="2" cy="8" r="1.45"/><circle cx="2" cy="14" r="1.45"/></svg></span></div>
<div class="row" style="top:579px"><span class="rn" style="left:24px">02. VSL Funnel</span><span class="rd">Mar 05, 2025 08:27 PM</span><span class="rc">6 Steps</span><span class="kb"><svg width="4" height="16" viewBox="0 0 4 16" fill="#1D2939"><circle cx="2" cy="2" r="1.45"/><circle cx="2" cy="8" r="1.45"/><circle cx="2" cy="14" r="1.45"/></svg></span></div>
<div class="row" style="top:646px;border-bottom:none"></div>

</div>

<div id="main-scroll">
  <svg class="abs" style="left:3px;top:5px" width="9" height="8" viewBox="0 0 9 8"><path d="M4.5 0.8 L8.6 7.2 H0.4 Z" fill="#8E8E8E"/></svg>
  <div class="sb-thumb" style="left:3px;top:17px;width:9px;height:678px"></div>
  <svg class="abs" style="left:3px;top:843px" width="9" height="8" viewBox="0 0 9 8"><path d="M0.4 0.8 H8.6 L4.5 7.2 Z" fill="#8E8E8E"/></svg>
</div>
<div id="teal"></div>
</body></html>
